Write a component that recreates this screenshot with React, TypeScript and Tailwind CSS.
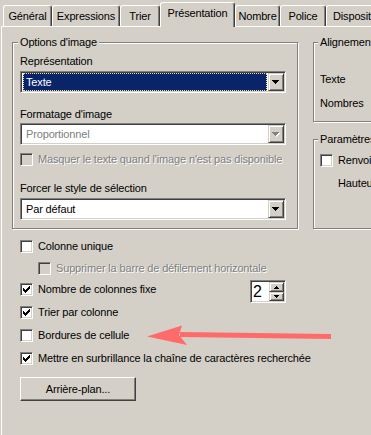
import React from "react"

const sunken =
  "border border-t-[#808080] border-l-[#808080] border-r-white border-b-white shadow-[inset_1px_1px_0_#404040,inset_-1px_-1px_0_#d4d0c8]"
const raised =
  "border border-t-[#d4d0c8] border-l-[#d4d0c8] border-r-[#404040] border-b-[#404040] shadow-[inset_1px_1px_0_#fff,inset_-1px_-1px_0_#808080]"
const etched = "border border-[#808080] shadow-[inset_1px_1px_0_#fff,1px_1px_0_#fff]"
const grayText = "text-[#808080] [text-shadow:1px_1px_0_#fff]"

function Check({ checked, disabled }: { checked?: boolean; disabled?: boolean }) {
  return (
    <span
      className={`w-[13px] h-[13px] shrink-0 flex items-center justify-center ${sunken} ${
        disabled ? "bg-[#d4d0c8]" : "bg-white"
      }`}
    >
      {checked && (
        <svg width="7" height="7" viewBox="0 0 7 7" shapeRendering="crispEdges">
          <path
            fill="#000"
            d="M6 0h1v1h-1z M5 1h2v1h-2z M0 2h1v1h-1z M4 2h3v1h-3z M0 3h2v1h-2z M3 3h3v1h-3z M0 4h5v1h-5z M1 5h3v1h-3z M2 6h1v1h-1z"
          />
        </svg>
      )}
    </span>
  )
}

function DownArrow({ disabled }: { disabled?: boolean }) {
  return (
    <svg width="8" height="5" viewBox="0 0 8 5" shapeRendering="crispEdges">
      {disabled && <path fill="#fff" d="M1 1h7v1h-7z M2 2h5v1h-5z M3 3h3v1h-3z M4 4h1v1h-1z" />}
      <path
        fill={disabled ? "#808080" : "#000"}
        d="M0 0h7v1h-7z M1 1h5v1h-5z M2 2h3v1h-3z M3 3h1v1h-1z"
      />
    </svg>
  )
}

function Combo({ text, selected, disabled }: { text: string; selected?: boolean; disabled?: boolean }) {
  return (
    <div className={`flex h-[22px] w-full bg-white ${sunken} p-[1px]`}>
      <div className="flex-1 flex items-center pl-[1px] pr-[1px]">
        {selected ? (
          <div className="h-full w-full bg-[#0a246a] border border-dotted border-[#f5db95] text-white flex items-center pl-[2px]">
            {text}
          </div>
        ) : (
          <span className={`pl-[3px] ${disabled ? "text-[#808080]" : ""}`}>{text}</span>
        )}
      </div>
      <div className={`w-[16px] h-full flex items-center justify-center bg-[#d4d0c8] ${raised}`}>
        <DownArrow disabled={disabled} />
      </div>
    </div>
  )
}

function Row({
  label,
  checked,
  disabled,
  className = "",
}: {
  label: string
  checked?: boolean
  disabled?: boolean
  className?: string
}) {
  return (
    <div className={`flex items-center gap-[5px] h-[13px] whitespace-nowrap ${className}`}>
      <Check checked={checked} disabled={disabled} />
      <span className={disabled ? grayText : ""}>{label}</span>
    </div>
  )
}

function Tab({ label, className, selected }: { label: string; className: string; selected?: boolean }) {
  return (
    <div
      className={`shrink-0 flex justify-center whitespace-nowrap overflow-hidden border-t border-l border-white border-r border-r-[#404040] shadow-[inset_-1px_0_0_#808080] rounded-t-[3px] ${
        selected ? "h-[25px] -mb-px relative z-10 bg-[#d4d0c8] pt-[4px]" : "h-[21px] pt-[4px]"
      } ${className}`}
    >
      {label}
    </div>
  )
}

export default function App() {
  return (
    <div className="w-[371px] h-[435px] bg-[#d4d0c8] overflow-hidden relative font-['Liberation_Sans',Arial,sans-serif] text-[11px] leading-[13px] tracking-[-0.15px] text-black">
      {/* tabs */}
      <div className="flex items-end h-[26px] pl-[3px]">
        <Tab label="Général" className="w-[49px]" />
        <Tab label="Expressions" className="w-[68px]" />
        <Tab label="Trier" className="w-[40px]" />
        <Tab label="Présentation" className="w-[75px]" selected />
        <Tab label="Nombre" className="w-[45px]" />
        <Tab label="Police" className="w-[46px]" />
        <Tab label="Disposition" className="w-[80px] justify-start pl-[6px]" />
      </div>

      {/* panel */}
      <div className="border-t border-l border-white ml-[1px] h-[409px] pt-[9px] pl-[10px] overflow-hidden">
        <div className="flex gap-[15px] items-stretch">
          <fieldset className={`w-[286px] shrink-0 p-0 m-0 ${etched}`}>
            <legend className="ml-[5px] px-[2px] bg-[#d4d0c8]">Options d'image</legend>
            <div className="pl-[7px] pr-[11px] pt-[6px] pb-[8px] flex flex-col">
              <div>Représentation</div>
              <div className="mt-[3px]">
                <Combo text="Texte" selected />
              </div>
              <div className="mt-[15px]">Formatage d'image</div>
              <div className="mt-[2px]">
                <Combo text="Proportionnel" disabled />
              </div>
              <Row
                className="mt-[8px]"
                label="Masquer le texte quand l'image n'est pas disponible"
                disabled
              />
              <div className="mt-[16px]">Forcer le style de sélection</div>
              <div className="mt-[3px]">
                <Combo text="Par défaut" />
              </div>
            </div>
          </fieldset>

          <div className="w-[120px] shrink-0 flex flex-col">
            <fieldset className={`p-0 m-0 ${etched}`}>
              <legend className="ml-[4px] px-[2px] bg-[#d4d0c8] whitespace-nowrap">Alignement</legend>
              <div className="pl-[6px] pt-[24px] pb-[11px] flex flex-col">
                <div>Texte</div>
                <div className="mt-[11px]">Nombres</div>
              </div>
            </fieldset>
            <fieldset className={`p-0 m-0 mt-[11px] flex-1 ${etched}`}>
              <legend className="ml-[4px] px-[2px] bg-[#d4d0c8] whitespace-nowrap">Paramètres</legend>
              <div className="pl-[6px] pt-[8px] flex flex-col">
                <Row label="Renvoi à la ligne" />
                <div className="mt-[10px] pl-[18px] whitespace-nowrap">Hauteur</div>
              </div>
            </fieldset>
          </div>
        </div>

        {/* lower options */}
        <div className="w-[286px] pl-[8px] pr-[12px] mt-[11px] flex flex-col">
          <Row label="Colonne unique" />
          <Row className="mt-[9px] ml-[18px]" label="Supprimer la barre de défilement horizontale" disabled />
          <div className="flex items-start mt-[5px] h-[23px]">
            <Row className="mt-[3px]" label="Nombre de colonnes fixe" checked />
            <div className={`ml-auto w-[36px] h-[23px] bg-white flex ${sunken}`}>
              <span className="flex-1 pl-[2px] text-[16px] leading-[19px] pt-[1px]">2</span>
              <div className="flex flex-col w-[16px] py-[1px] pr-[1px] gap-0">
                <div className={`h-[10px] flex items-center justify-center bg-[#d4d0c8] ${raised}`}>
                  <svg width="5" height="3" viewBox="0 0 5 3" shapeRendering="crispEdges">
                    <path fill="#000" d="M2 0h1v1h-1z M1 1h3v1h-3z M0 2h5v1h-5z" />
                  </svg>
                </div>
                <div className={`h-[9px] flex items-center justify-center bg-[#d4d0c8] ${raised}`}>
                  <svg width="5" height="3" viewBox="0 0 5 3" shapeRendering="crispEdges">
                    <path fill="#000" d="M0 0h5v1h-5z M1 1h3v1h-3z M2 2h1v1h-1z" />
                  </svg>
                </div>
              </div>
            </div>
          </div>
          <Row className="mt-[3px]" label="Trier par colonne" checked />
          <Row className="mt-[10px]" label="Bordures de cellule" />
          <Row className="mt-[10px]" label="Mettre en surbrillance la chaîne de caractères recherchée" checked />
          <button
            className={`mt-[12px] w-[116px] h-[24px] bg-[#d4d0c8] flex items-center justify-center border border-t-white border-l-white border-r-[#404040] border-b-[#404040] shadow-[inset_-1px_-1px_0_#808080]`}
          >
            Arrière-plan...
          </button>
        </div>
      </div>

      {/* red annotation arrow */}
      <svg className="absolute left-[140px] top-[320px]" width="200" height="30" viewBox="0 0 200 30">
        <line x1="40" y1="14.5" x2="191" y2="16.5" stroke="#ff6b6b" strokeWidth="5" />
        <path d="M7 16.5 L42 5.5 L39 15 L47 25 Z" fill="#ff6b6b" />
      </svg>
    </div>
  )
}
